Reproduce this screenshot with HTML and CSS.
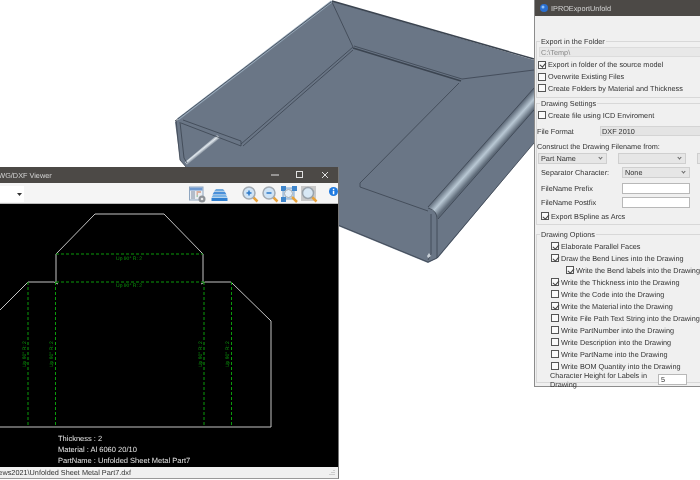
FILE: index.html
```html
<!DOCTYPE html>
<html lang="en">
<head>
<meta charset="utf-8">
<title>Unfolded Sheet Metal</title>
<link rel="stylesheet" href="styles.css">
</head>
<body>
<main class="stage">
  <svg class="model" viewBox="0 0 700 480" width="700" height="480" aria-label="Sheet metal part">
    <defs>
      <linearGradient id="bend" gradientUnits="userSpaceOnUse" x1="480" y1="149" x2="490" y2="158">
        <stop offset="0" stop-color="#5f6b7a"/>
        <stop offset=".5" stop-color="#b9c8d4"/>
        <stop offset="1" stop-color="#5d6977"/>
      </linearGradient>
      <linearGradient id="rod" gradientUnits="userSpaceOnUse" x1="200" y1="147" x2="204" y2="152">
        <stop offset="0" stop-color="#707c8a"/>
        <stop offset=".5" stop-color="#dfe6ec"/>
        <stop offset="1" stop-color="#6a7685"/>
      </linearGradient>
    </defs>
    <polygon class="body" points="332,1 534,60 534,143 438,258 428,263 338,226 240,190 186,167 180,160 175,122"/>
    <polygon fill="url(#rod)" points="185,162 217,135 220,138 187,165"/>
    <polygon class="flapedge" points="177,118.500 331,.5 333,2 179,120"/>
    <path class="line" d="M175,121L331,2M332,2L353,47L241,144M353,50L243,146"/>
    <path class="line" d="M183,120L241,141M181,123L241,146L241,141M176,120L180,160L186,167M180,122L184,158L187,163"/>
    <path class="thick" d="M353,48L461,81"/>
    <path class="line" d="M354,46L462,79L534,70M459,83L360,183L360,187L428,211"/>
    <path class="thick" d="M332,1L534,59"/>
    <polygon fill="url(#bend)" points="428,207 534,88 534,110 438,219 436,213"/>
    <path class="line" d="M428,207L534,88M438,219L534,110M428,208C435,210 437,214 437,220L437,258L534,143M431,214L431,254L428,260M338,225L428,262L437,258"/>
    <polygon class="chip" points="429,253 431,256 428,258 427,256"/>
  </svg>

  <section class="viewer">
    <header class="titlebar viewer-title">
      <span class="title-text">DWG/DXF Viewer</span>
      <div class="win-controls">
        <svg width="8" height="2" viewBox="0 0 8 2"><path d="M0 1H8" class="ctl"/></svg>
        <svg width="8" height="8" viewBox="0 0 8 8"><rect x=".5" y=".5" width="6" height="6" class="ctl"/></svg>
        <svg width="8" height="8" viewBox="0 0 8 8"><path d="M1 1L7 7M7 1L1 7" class="ctl"/></svg>
      </div>
    </header>
    <div class="toolbar">
      <div class="combo"><svg width="5" height="3" viewBox="0 0 5 3"><path d="M0 0H5L2.500 3Z" fill="#333"/></svg></div>
      <div class="tools">
        <svg width="17" height="17" viewBox="0 0 17 17"><rect x=".5" y="1" width="13.500" height="13" fill="#e9edf2" stroke="#8fa6c0"/><rect x="1" y="1.500" width="12.500" height="3" fill="#6f9ad0"/><path d="M2 6H6M2 8H6M2 10H6M2 12H6" stroke="#7d8ba0"/><path d="M7.500 6H12M7.500 8H9" stroke="#c9744f"/><path d="M7.500 10H9" stroke="#6aa56a"/><circle cx="13" cy="13" r="3.500" fill="#8e9297"/><circle cx="13" cy="13" r="1.300" fill="#e8e8e8"/></svg>
        <svg class="t-layers" width="17" height="14" viewBox="0 0 17 14"><path d="M5 1H12L14 3.500H3Z" fill="#6fa8dc"/><path d="M3 4H14L15.500 6.500H1.500Z" fill="#4a90d9"/><path d="M2 7H15L16.500 9.500H.5Z" fill="#7ab4e6"/><path d="M.5 10H16.500V13H.5Z" fill="#2f7fd0"/></svg>
        <svg class="t-zin" width="17" height="17" viewBox="0 0 17 17"><path d="M10.500 10.500L15.500 15.500" stroke="#e8a23a" stroke-width="2.500"/><circle cx="7" cy="7" r="6" fill="#cfe3f5" stroke="#a3abb3" stroke-width="1.500"/><path d="M4.500 7H9.500M7 4.500V9.500" stroke="#2a78c8" stroke-width="1.500"/></svg>
        <svg class="t-zout" width="17" height="17" viewBox="0 0 17 17"><path d="M10.500 10.500L15.500 15.500" stroke="#e8a23a" stroke-width="2.500"/><circle cx="7" cy="7" r="6" fill="#cfe3f5" stroke="#a3abb3" stroke-width="1.500"/><path d="M4.500 7H9.500" stroke="#2a78c8" stroke-width="1.500"/></svg>
        <svg class="t-fit" width="17" height="17" viewBox="0 0 17 17"><rect x="2" y="2" width="11" height="11" fill="#cfe0f0" stroke="#7ea6cf"/><rect x="0" y="0" width="5" height="5" fill="#3f86cc"/><rect x="11" y="0" width="5" height="5" fill="#3f86cc"/><rect x="0" y="11" width="5" height="5" fill="#3f86cc"/><circle cx="7.500" cy="7.500" r="4" fill="#e4eef7" stroke="#a3abb3"/><path d="M11 11L16 16" stroke="#e8a23a" stroke-width="2.500"/></svg>
        <svg class="t-zwin" width="17" height="17" viewBox="0 0 17 17"><rect width="15" height="15" fill="#c9c9c9"/><path d="M10.500 10.500L15.500 15.500" stroke="#e8a23a" stroke-width="2.500"/><circle cx="7" cy="7" r="5.500" fill="#d8e8f5" stroke="#9aa3ab" stroke-width="1.500"/></svg>
        <svg class="t-info" width="9" height="9" viewBox="0 0 9 9"><circle cx="4.500" cy="4.500" r="4.500" fill="#1f7ae0"/><rect x="3.800" y="3.800" width="1.500" height="3.500" fill="#fff"/><rect x="3.800" y="1.700" width="1.500" height="1.400" fill="#fff"/></svg>
      </div>
    </div>
    <div class="canvas">
      <svg class="drawing" viewBox="-12 204 350 263" width="350" height="263">
        <path class="outline" d="M56,282V254L95,214H164L203,254V282M-12,322L28,282H54L58,284M201,284L205,282H231L271,321V427H-12"/>
        <path class="bendline" d="M56,254H203M56,282H204M28,282V427M55.500,282V427M204,282V427M231.500,282V427"/>
        <text class="bendtext" x="129" y="259.500" text-anchor="middle">Up 90° R: 2</text>
        <text class="bendtext" x="129" y="287" text-anchor="middle">Up 90° R: 2</text>
        <text class="bendtext" transform="translate(26,367) rotate(-90)">Up 90° R: 2</text>
        <text class="bendtext" transform="translate(53,367) rotate(-90)">Up 90° R: 2</text>
        <text class="bendtext" transform="translate(202,367) rotate(-90)">Up 90° R: 2</text>
        <text class="bendtext" transform="translate(229,367) rotate(-90)">Up 90° R: 2</text>
        <text class="note" x="58" y="441">Thickness : 2</text>
        <text class="note" x="58" y="452">Material : Al 6060 20/10</text>
        <text class="note" x="58" y="463">PartName : Unfolded Sheet Metal Part7</text>
      </svg>
    </div>
    <footer class="statusbar">
      <div class="status-path"><span>C:\WhatNews2021\Unfolded Sheet Metal Part7.dxf</span></div>
      <svg class="grip" width="6" height="6" viewBox="0 0 6 6"><path d="M5 0V1M3 2V3M5 2V3M1 4V5M3 4V5M5 4V5" stroke="#aaa"/></svg>
    </footer>
  </section>

  <section class="dialog">
    <header class="titlebar dialog-title">
      <svg width="8" height="8" viewBox="0 0 8 8"><circle cx="4" cy="4" r="4" fill="#2a6fd0"/><circle cx="3" cy="3" r="1.500" fill="#8fc0f5"/></svg>
      <span class="title-text">IPROExportUnfold</span>
    </header>
    <div class="dialog-body">
      <div class="group group-folder">
        <div class="legend">Export in the Folder</div>
        <div class="path-field">C:\Temp\</div>
        <label class="opt"><span class="cb on"></span>Export in folder of the source model</label>
        <label class="opt"><span class="cb"></span>Overwrite Existing Files</label>
        <label class="opt"><span class="cb"></span>Create Folders by Material and Thickness</label>
      </div>
      <div class="group group-settings">
        <div class="legend">Drawing Settings</div>
        <label class="opt opt-icd"><span class="cb"></span>Create file using ICD Enviroment</label>
        <div class="format-row"><span>File Format</span><div class="format-field">DXF 2010</div></div>
        <div class="construct">Construct the Drawing Filename from:</div>
        <div class="select-row">
          <div class="select sel-name">Part Name<i class="chev"></i></div>
          <div class="select sel-mid"><i class="chev"></i></div>
          <div class="select sel-end"></div>
        </div>
        <div class="form-row row-sep"><span class="form-label">Separator Character:</span><div class="select sel-mid">None<i class="chev"></i></div></div>
        <div class="form-row row-prefix"><span class="form-label">FileName Prefix</span><div class="input"></div></div>
        <div class="form-row row-postfix"><span class="form-label">FileName Postfix</span><div class="input"></div></div>
        <label class="opt opt-bspline"><span class="cb on"></span>Export BSpline as Arcs</label>
      </div>
      <div class="group group-options">
        <div class="legend">Drawing Options</div>
        <label class="opt opt-d"><span class="cb on"></span>Elaborate Parallel Faces</label>
        <label class="opt opt-d"><span class="cb on"></span>Draw the Bend Lines into the Drawing</label>
        <label class="opt opt-d opt-sub"><span class="cb on"></span>Write the Bend labels into the Drawing</label>
        <label class="opt opt-d"><span class="cb on"></span>Write the Thickness into the Drawing</label>
        <label class="opt opt-d"><span class="cb"></span>Write the Code into the Drawing</label>
        <label class="opt opt-d"><span class="cb on"></span>Write the Material into the Drawing</label>
        <label class="opt opt-d"><span class="cb"></span>Write File Path Text String into the Drawing</label>
        <label class="opt opt-d"><span class="cb"></span>Write PartNumber into the Drawing</label>
        <label class="opt opt-d"><span class="cb"></span>Write Description into the Drawing</label>
        <label class="opt opt-d"><span class="cb"></span>Write PartName into the Drawing</label>
        <label class="opt opt-d"><span class="cb"></span>Write BOM Quantity into the Drawing</label>
        <div class="height-row"><span>Character Height for Labels in Drawing</span><div class="input input-height">5</div></div>
      </div>
    </div>
  </section>
</main>
</body>
</html>
```
FILE: styles.css
```css
* { box-sizing: border-box; }
html, body { margin: 0; padding: 0; background: #fff; }
.stage {
  position: relative;
  width: 700px;
  height: 480px;
  overflow: hidden;
  background: #fff;
  font-family: "Liberation Sans Narrow", "Liberation Sans", Arial, sans-serif;
  font-size: 7.300px;
  color: #333;
  text-rendering: geometricPrecision;
  filter: blur(0.35px);
}
.model { display: block; }
.body { fill: #6a7686; }
.flapedge { fill: #94a5b6; }
.line { fill: none; stroke: #3b4450; stroke-width: .8; }
.thick { fill: none; stroke: #3b4450; stroke-width: 1.600; }
.chip { fill: #c8d0d8; }

.titlebar {
  display: flex;
  align-items: center;
  background: #4c4946;
  color: #d4d4d4;
  flex: none;
}
.title-text { font-size: 7.300px; }

.viewer {
  position: absolute;
  left: -12px;
  top: 167px;
  width: 351px;
  height: 312px;
  display: flex;
  flex-direction: column;
  background: #f0f0f0;
  border-right: 1px solid #777;
  border-bottom: 1px solid #999;
}
.viewer-title { height: 16px; padding-left: 5px; justify-content: space-between; }
.win-controls { display: flex; align-items: center; gap: 17px; padding-right: 9px; }
.ctl { fill: none; stroke: #e0e0e0; stroke-width: 1; }
.toolbar {
  height: 21px;
  flex: none;
  display: flex;
  align-items: flex-start;
  background: #f5f5f5;
  border-bottom: 1px solid #bbb;
}
.combo {
  width: 36px;
  height: 16px;
  margin-top: 3px;
  background: #fff;
  display: flex;
  align-items: center;
  justify-content: flex-end;
  padding-right: 2px;
  flex: none;
}
.tools { display: flex; align-items: flex-start; margin-left: 165px; padding-top: 3px; }
.t-layers { margin: 2px 0 0 5px; }
.t-zin { margin-left: 14px; }
.t-zout { margin-left: 3px; }
.t-fit { margin-left: 2px; }
.t-zwin { margin-left: 3px; }
.t-info { margin: 1px 0 0 11px; }
.canvas { height: 263px; flex: none; background: #000; overflow: hidden; }
.drawing { display: block; }
.outline { fill: none; stroke: #c4c4c4; stroke-width: 1; }
.bendline { fill: none; stroke: #0a9a0a; stroke-width: 1; stroke-dasharray: 3 2; }
.bendtext { fill: #0b9a0b; font-size: 5px; font-family: "Liberation Sans", sans-serif; }
.note { fill: #e6e6e6; font-size: 7.500px; font-family: "Liberation Sans", sans-serif; }
.statusbar {
  flex: 1;
  display: flex;
  align-items: center;
  justify-content: space-between;
  background: #f0f0f0;
  padding-right: 3px;
  overflow: hidden;
  color: #333;
}
.status-path {
  width: 143px;
  flex: none;
  display: flex;
  justify-content: flex-end;
  white-space: nowrap;
}

.dialog {
  position: absolute;
  left: 534px;
  top: 0;
  width: 190px;
  height: 387px;
  background: #f0f0f0;
  border-left: 1px solid #8c8c8c;
  border-bottom: 1px solid #8c8c8c;
  display: flex;
  flex-direction: column;
}
.dialog-title { height: 16px; padding-left: 5px; gap: 3px; }
.dialog-body { padding: 25px 0 0 1px; display: flex; flex-direction: column; }
.group { border: 1px solid #d8d8d8; }
.group-folder { height: 57px; }
.group-settings { height: 122px; margin-top: 5px; }
.group-options { height: 149px; margin-top: 9px; }
.legend {
  width: fit-content;
  height: 11px;
  line-height: 11px;
  margin: -6px 0 0 3px;
  padding: 0 1px;
  background: #f0f0f0;
}
.path-field {
  height: 10px;
  line-height: 9px;
  margin: 0 0 2px 2px;
  padding-left: 1px;
  background: #e8e8e8;
  border: 1px solid #dcdcdc;
  color: #888;
}
.opt {
  display: flex;
  align-items: center;
  height: 11.700px;
  padding-left: 1px;
  white-space: nowrap;
}
.cb {
  width: 8px;
  height: 8px;
  flex: none;
  margin-right: 2px;
  background: #fafafa;
  border: 1px solid #555;
  position: relative;
}
.cb.on::after {
  content: "";
  position: absolute;
  left: 1.500px;
  top: -.5px;
  width: 2.500px;
  height: 5px;
  border-right: 1px solid #444;
  border-bottom: 1px solid #444;
  transform: rotate(40deg);
}
.opt-icd { padding-left: 1px; height: 12px; }
.format-row { display: flex; align-items: center; height: 10px; margin-top: 5px; }
.format-row span { width: 63px; }
.format-field {
  flex: 1;
  height: 10px;
  line-height: 9px;
  background: #e4e4e4;
  border: 1px solid #d4d4d4;
  padding-left: 1px;
  color: #333;
}
.construct { height: 11px; line-height: 11px; margin-top: 5px; }
.select-row { display: flex; height: 11px; margin-top: 1px; margin-left: 1px; gap: 11px; }
.select {
  height: 11px;
  line-height: 9px;
  background: #e6e6e6;
  border: 1px solid #cfcfcf;
  padding-left: 2px;
  position: relative;
  color: #333;
  flex: none;
}
.sel-name { width: 69px; }
.sel-mid { width: 68px; }
.sel-end { width: 30px; }
.chev {
  position: absolute;
  right: 4px;
  top: 2px;
  width: 3px;
  height: 3px;
  border-right: 1px solid #666;
  border-bottom: 1px solid #666;
  transform: rotate(45deg);
}
.form-row { display: flex; align-items: center; height: 11px; padding-left: 4px; }
.form-label { width: 81px; flex: none; }
.row-sep { margin-top: 3px; }
.row-prefix { margin-top: 5px; }
.row-postfix { margin-top: 3px; }
.input { width: 68px; height: 11px; line-height: 9px; background: #fff; border: 1px solid #b8b8b8; padding-left: 2px; flex: none; }
.opt-bspline { padding-left: 4px; margin-top: 2px; height: 12px; }
.opt-d { padding-left: 14px; height: 12px; }
.opt-sub { padding-left: 29px; }
.height-row { display: flex; align-items: center; height: 11px; margin-top: 2px; padding-left: 13px; }
.height-row span { width: 108px; flex: none; }
.input-height { width: 29px; }
```
